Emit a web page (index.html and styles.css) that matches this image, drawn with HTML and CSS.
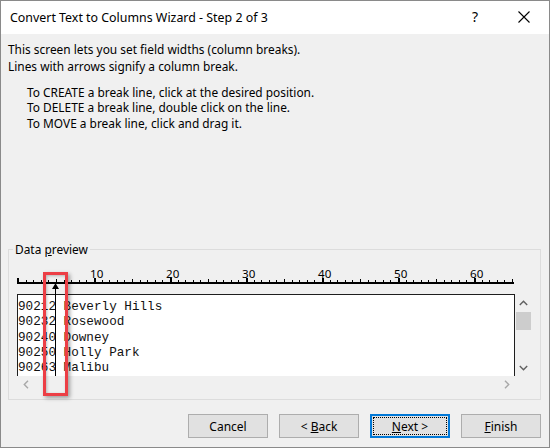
FILE: index.html
```html
<!DOCTYPE html>
<html>
<head>
<meta charset="utf-8">
<title>Convert Text to Columns Wizard</title>
<link rel="stylesheet" href="styles.css">
</head>
<body>
<div class="window">
  <div class="titlebar">
    <span class="title">Convert Text to Columns Wizard - Step 2 of 3</span>
    <span class="help">?</span>
    <span class="close"><svg width="12" height="12" viewBox="0 0 12 12"><path d="M0.5 0.5 L11.5 11.5 M11.5 0.5 L0.5 11.5" stroke="#000" stroke-width="1.1" fill="none"/></svg></span>
  </div>
  <div class="content">
    <div class="intro">
      <div>This screen lets you set field widths (column breaks).</div>
      <div>Lines with arrows signify a column break.</div>
    </div>
    <div class="howto">
      <div>To CREATE a break line, click at the desired position.</div>
      <div>To DELETE a break line, double click on the line.</div>
      <div>To MOVE a break line, click and drag it.</div>
    </div>
    <fieldset class="group">
      <legend class="group-label">Data <u>p</u>review</legend>
      <div class="preview">
        <svg class="ruler" width="515" height="37" viewBox="0 0 515 37">
          <rect x="0" y="25" width="497" height="2" fill="#000"/>
          <g fill="#000">
            <rect x="0" y="21" width="2" height="4"/>
            <rect x="9" y="23" width="1" height="2"/>
            <rect x="16" y="23" width="1" height="2"/>
            <rect x="24" y="23" width="1" height="2"/>
            <rect x="31" y="23" width="1" height="2"/>
            <rect x="39" y="22" width="1" height="3"/>
            <rect x="47" y="23" width="1" height="2"/>
            <rect x="54" y="23" width="1" height="2"/>
            <rect x="62" y="23" width="1" height="2"/>
            <rect x="69" y="23" width="1" height="2"/>
            <rect x="77" y="21" width="2" height="4"/>
            <rect x="85" y="23" width="1" height="2"/>
            <rect x="92" y="23" width="1" height="2"/>
            <rect x="100" y="23" width="1" height="2"/>
            <rect x="107" y="23" width="1" height="2"/>
            <rect x="115" y="22" width="1" height="3"/>
            <rect x="123" y="23" width="1" height="2"/>
            <rect x="130" y="23" width="1" height="2"/>
            <rect x="138" y="23" width="1" height="2"/>
            <rect x="145" y="23" width="1" height="2"/>
            <rect x="153" y="21" width="2" height="4"/>
            <rect x="161" y="23" width="1" height="2"/>
            <rect x="168" y="23" width="1" height="2"/>
            <rect x="176" y="23" width="1" height="2"/>
            <rect x="183" y="23" width="1" height="2"/>
            <rect x="191" y="22" width="1" height="3"/>
            <rect x="199" y="23" width="1" height="2"/>
            <rect x="206" y="23" width="1" height="2"/>
            <rect x="214" y="23" width="1" height="2"/>
            <rect x="221" y="23" width="1" height="2"/>
            <rect x="229" y="21" width="2" height="4"/>
            <rect x="237" y="23" width="1" height="2"/>
            <rect x="244" y="23" width="1" height="2"/>
            <rect x="252" y="23" width="1" height="2"/>
            <rect x="259" y="23" width="1" height="2"/>
            <rect x="267" y="22" width="1" height="3"/>
            <rect x="275" y="23" width="1" height="2"/>
            <rect x="282" y="23" width="1" height="2"/>
            <rect x="290" y="23" width="1" height="2"/>
            <rect x="297" y="23" width="1" height="2"/>
            <rect x="305" y="21" width="2" height="4"/>
            <rect x="313" y="23" width="1" height="2"/>
            <rect x="320" y="23" width="1" height="2"/>
            <rect x="328" y="23" width="1" height="2"/>
            <rect x="335" y="23" width="1" height="2"/>
            <rect x="343" y="22" width="1" height="3"/>
            <rect x="351" y="23" width="1" height="2"/>
            <rect x="358" y="23" width="1" height="2"/>
            <rect x="366" y="23" width="1" height="2"/>
            <rect x="373" y="23" width="1" height="2"/>
            <rect x="381" y="21" width="2" height="4"/>
            <rect x="389" y="23" width="1" height="2"/>
            <rect x="396" y="23" width="1" height="2"/>
            <rect x="404" y="23" width="1" height="2"/>
            <rect x="411" y="23" width="1" height="2"/>
            <rect x="419" y="22" width="1" height="3"/>
            <rect x="427" y="23" width="1" height="2"/>
            <rect x="434" y="23" width="1" height="2"/>
            <rect x="442" y="23" width="1" height="2"/>
            <rect x="449" y="23" width="1" height="2"/>
            <rect x="457" y="21" width="2" height="4"/>
            <rect x="465" y="23" width="1" height="2"/>
            <rect x="472" y="23" width="1" height="2"/>
            <rect x="480" y="23" width="1" height="2"/>
            <rect x="487" y="23" width="1" height="2"/>
            <rect x="495" y="22" width="1" height="3"/>
          </g>
          <g class="ruler-num">
            <text x="73" y="21">10</text>
            <text x="149" y="21">20</text>
            <text x="225" y="21">30</text>
            <text x="301" y="21">40</text>
            <text x="377" y="21">50</text>
            <text x="453" y="21">60</text>
          </g>
        </svg>
        <div class="grid">
          <div class="box"><div>90212 Beverly Hills</div><div>90232 Rosewood</div><div>90240 Downey</div><div>90250 Holly Park</div><div>90263 Malibu</div></div>
          <div class="vscroll">
            <div class="sarrow"><svg width="9" height="6" viewBox="0 0 9 6"><path d="M0.8 5 L4.5 1.3 L8.2 5" stroke="#606060" stroke-width="1.4" fill="none"/></svg></div>
            <div class="thumb"></div>
            <div class="sarrow down"><svg width="9" height="6" viewBox="0 0 9 6"><path d="M0.8 1 L4.5 4.7 L8.2 1" stroke="#606060" stroke-width="1.4" fill="none"/></svg></div>
          </div>
          <div class="hscroll">
            <div class="sarrow"><svg width="6" height="9" viewBox="0 0 6 9"><path d="M5 0.8 L1.3 4.5 L5 8.2" stroke="#a8a8a8" stroke-width="1.4" fill="none"/></svg></div>
            <div class="sarrow"><svg width="6" height="9" viewBox="0 0 6 9"><path d="M1 0.8 L4.7 4.5 L1 8.2" stroke="#a8a8a8" stroke-width="1.4" fill="none"/></svg></div>
          </div>
          <div class="corner"></div>
        </div>
        <div class="break"></div>
        <div class="highlight"></div>
      </div>
    </fieldset>
    <div class="buttons">
      <div class="btn"><span>Cancel</span></div>
      <div class="btn"><span>&lt; <u>B</u>ack</span></div>
      <div class="btn default"><span><u>N</u>ext &gt;</span></div>
      <div class="btn"><span><u>F</u>inish</span></div>
    </div>
  </div>
</div>
</body>
</html>
```
FILE: styles.css
```css
html, body {
  margin: 0;
  padding: 0;
  background: #f0f0f0;
}

.window {
  width: 550px;
  height: 448px;
  box-sizing: border-box;
  border: 1px solid #8a8a8a;
  background: #f0f0f0;
  display: flex;
  flex-direction: column;
  font-family: "Noto Sans", "Open Sans", sans-serif;
  font-size: 11.9px;
  color: #000;
}

.titlebar {
  flex: none;
  height: 33px;
  background: #fff;
  display: flex;
  align-items: center;
}

.title {
  padding-left: 9px;
  font-size: 12.4px;
}

.help {
  margin-left: auto;
  width: 46px;
  text-align: center;
  font-size: 14px;
  margin-bottom: 2px;
}

.close {
  width: 46px;
  margin-left: 3px;
  margin-right: 2px;
  margin-bottom: 2px;
  display: flex;
  justify-content: center;
}

.close svg {
  display: block;
}

.content {
  flex: 1;
  display: flex;
  flex-direction: column;
  padding: 7px 8px 0 7px;
}

.intro {
  line-height: 17px;
}

.howto {
  margin: 10px 0 0 19px;
  line-height: 15.3px;
}

.group {
  margin: auto 0 0 0;
  padding: 0 8px 6px 8px;
  border: 1px solid #dcdcdc;
  min-width: 0;
}

.group-label {
  padding: 0 2px;
  margin-left: -4px;
  line-height: 15px;
}

.preview {
  position: relative;
  width: 515px;
}

.ruler {
  display: block;
}

.ruler-num text {
  font-family: "Noto Sans", "Open Sans", sans-serif;
  font-size: 11.6px;
  fill: #000;
}

.grid {
  display: grid;
  grid-template-columns: 498px 17px;
  grid-template-rows: 82px 17px;
}

.box {
  background: #fff;
  border: 1px solid #1e1e1e;
  border-bottom: none;
  box-sizing: border-box;
  padding-top: 4px;
  font-family: "Liberation Mono", "Courier New", monospace;
  font-size: 12.67px;
  line-height: 15.25px;
  white-space: pre;
  overflow: hidden;
  color: #111;
}

.vscroll {
  display: flex;
  flex-direction: column;
}

.sarrow {
  width: 17px;
  height: 17px;
  display: flex;
  align-items: center;
  justify-content: center;
  flex: none;
}

.sarrow svg {
  display: block;
}

.thumb {
  margin: 1px 0 0 1px;
  width: 15px;
  height: 18px;
  background: #cdcdcd;
}

.vscroll .down {
  margin-top: auto;
}

.hscroll {
  display: flex;
  justify-content: space-between;
}

.break {
  position: absolute;
  left: 38px;
  top: 32px;
  width: 1px;
  height: 87px;
  background: #000;
}

.break::before {
  content: "";
  position: absolute;
  top: -5px;
  left: -3px;
  width: 1px;
  height: 0;
  border-left: 3px solid transparent;
  border-right: 3px solid transparent;
  border-bottom: 5px solid #000;
}

.highlight {
  position: absolute;
  left: 26px;
  top: 15px;
  width: 25px;
  height: 124px;
  box-sizing: border-box;
  border: 3px solid #ec3e45;
  box-shadow: 2px 2px 4px rgba(0, 0, 0, 0.35), inset 1px 1px 3px rgba(0, 0, 0, 0.25);
}

.buttons {
  display: flex;
  justify-content: flex-end;
  gap: 11px;
  margin: 14px 0 9px 0;
}

.btn {
  width: 80px;
  height: 24px;
  box-sizing: border-box;
  background: #e1e1e1;
  border: 1px solid #adadad;
  display: flex;
  align-items: center;
  justify-content: center;
  font-size: 12px;
}

.btn.default {
  border-color: #0078d7;
  box-shadow: inset 0 0 0 1px #0078d7;
  outline: 1px dotted #000;
  outline-offset: -4px;
}
```
